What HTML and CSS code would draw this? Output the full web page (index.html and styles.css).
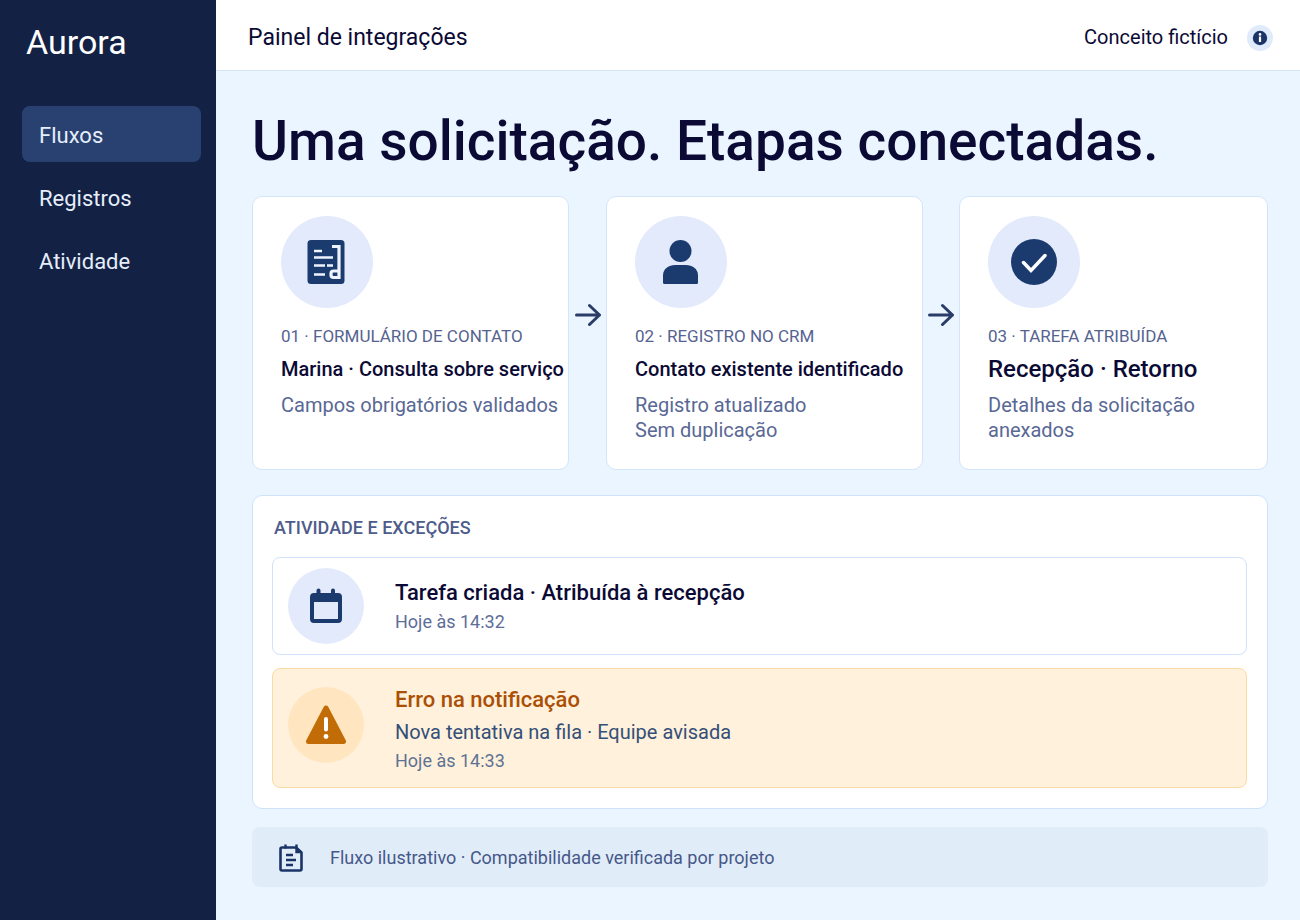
FILE: index.html
```html
<!DOCTYPE html>
<html lang="pt-BR">
<head>
    <meta charset="UTF-8">
    <meta name="viewport" content="width=device-width, initial-scale=1.0">
    <title>Aurora - Painel de integrações</title>
    <link rel="stylesheet" href="styles.css">
</head>
<body>

    <aside class="sidebar">
        <div class="brand">Aurora</div>
        <nav class="menu">
            <a href="#fluxos" class="active">Fluxos</a>
            <a href="#registros">Registros</a>
            <a href="#atividade">Atividade</a>
        </nav>
    </aside>

    <div class="page">
        <header class="topbar">
            <div class="topbar-title">Painel de integrações</div>
            <div class="topbar-right">
                <span>Conceito fictício</span>
                <button class="info" aria-label="Informações">
                    <svg width="26" height="26" viewBox="0 0 26 26">
                        <circle cx="13" cy="13" r="7.2" fill="#1b3468"/>
                        <circle cx="13" cy="9.4" r="1.3" fill="#fff"/>
                        <path d="M13 11.5v5.5" stroke="#fff" stroke-width="2.2"/>
                    </svg>
                </button>
            </div>
        </header>

        <main class="content">
            <h1>Uma solicitação. Etapas conectadas.</h1>

            <section class="steps" id="fluxos">
                <article class="card">
                    <div class="circle">
                        <svg width="48" height="48" viewBox="0 0 48 48">
                            <rect x="4.500" y="2" width="37" height="44" rx="3.500" fill="#1b3a6e"/>
                            <g fill="none" stroke="#eef3ff" stroke-width="2.400">
                                <path d="M11 13h8M11 19.500h19M11 27.500h11M24 27.500h6M11 36.500h11"/>
                                <path d="M29 8.500h7v31h-5.500q-2.500 0-2.500-2.500v-1.500q0-2.500 2.500-2.500h5.500" stroke-width="3.200"/>
                            </g>
                        </svg>
                    </div>
                    <p class="step">01 · FORMULÁRIO DE CONTATO</p>
                    <h2>Marina · Consulta sobre serviço</h2>
                    <p class="desc">Campos obrigatórios validados</p>
                </article>

                <svg class="arrow" width="26" height="24" viewBox="0 0 26 24">
                    <path d="M1.500 12h23M14.500 2.500l10 9.500l-10 9.500"/>
                </svg>

                <article class="card">
                    <div class="circle">
                        <svg width="48" height="48" viewBox="0 0 48 48" fill="#1b3a6e">
                            <circle cx="23.500" cy="13" r="11"/>
                            <path d="M6 44.500v-7c0-7 6-10.500 12-10.500h11c6 0 12 3.500 12 10.500v7q0 1.500-1.500 1.500h-32q-1.500 0-1.500-1.500z"/>
                        </svg>
                    </div>
                    <p class="step">02 · REGISTRO NO CRM</p>
                    <h2>Contato existente identificado</h2>
                    <p class="desc">Registro atualizado<br>Sem duplicação</p>
                </article>

                <svg class="arrow" width="26" height="24" viewBox="0 0 26 24">
                    <path d="M1.500 12h23M14.500 2.500l10 9.500l-10 9.500"/>
                </svg>

                <article class="card">
                    <div class="circle">
                        <svg width="48" height="48" viewBox="0 0 48 48">
                            <circle cx="24" cy="24" r="23" fill="#1b3a6e"/>
                            <path d="M13.500 24.500l7.500 8l14-15" fill="none" stroke="#fff" stroke-width="3.500" stroke-linecap="round"/>
                        </svg>
                    </div>
                    <p class="step">03 · TAREFA ATRIBUÍDA</p>
                    <h2 class="large">Recepção · Retorno</h2>
                    <p class="desc">Detalhes da solicitação<br>anexados</p>
                </article>
            </section>

            <section class="panel" id="atividade">
                <h3>ATIVIDADE E EXCEÇÕES</h3>

                <div class="event">
                    <div class="circle small">
                        <svg width="36" height="38" viewBox="0 0 36 38">
                            <rect x="4" y="8" width="28" height="26" rx="2" fill="none" stroke="#1b3a6e" stroke-width="4"/>
                            <path d="M3 7h30v8H3z" fill="#1b3a6e"/>
                            <path d="M10.500 3.500v5M25 3.500v5" stroke="#1b3a6e" stroke-width="4" stroke-linecap="round"/>
                        </svg>
                    </div>
                    <div>
                        <h4>Tarefa criada · Atribuída à recepção</h4>
                        <p class="time">Hoje às 14:32</p>
                    </div>
                </div>

                <div class="event warning">
                    <div class="circle small">
                        <svg width="44" height="42" viewBox="0 0 44 42">
                            <path d="M22 4L39.500 37.500H4.500z" fill="#c26c08" stroke="#c26c08" stroke-width="5" stroke-linejoin="round"/>
                            <path d="M22 15v10.500" stroke="#fff" stroke-width="4" stroke-linecap="round"/>
                            <circle cx="22" cy="32.500" r="2.400" fill="#fff"/>
                        </svg>
                    </div>
                    <div>
                        <h4>Erro na notificação</h4>
                        <p class="detail">Nova tentativa na fila · Equipe avisada</p>
                        <p class="time">Hoje às 14:33</p>
                    </div>
                </div>
            </section>

            <footer class="note">
                <svg width="26" height="30" viewBox="0 0 26 30" fill="none" stroke="#1b3468" stroke-width="2.600">
                    <path d="M18 4.500H4q-1.500 0-1.500 1.500v20q0 1.500 1.500 1.500h18q1.500 0 1.500-1.500V9.500z" stroke-linejoin="round"/>
                    <path d="M7.500 1.500v4M18.500 1.500v7.500h4.500M8 12h7M8 17h10M8 22h7" stroke-width="2.400"/>
                </svg>
                <span>Fluxo ilustrativo · Compatibilidade verificada por projeto</span>
            </footer>
        </main>
    </div>

</body>
</html>
```

FILE: styles.css
```css
* {
    box-sizing: border-box;
}

body {
    margin: 0;
    min-height: 100vh;
    display: flex;
    font-family: Roboto, "Open Sans", sans-serif;
    background-color: #ebf5ff;
    color: #0b0a35;
}

h1, h2, h3, h4, p {
    margin: 0;
}

.sidebar {
    width: 216px;
    flex-shrink: 0;
    padding: 20px 15px 20px 22px;
    background-color: #132144;
}

.brand {
    padding-left: 4px;
    font-size: 34px;
    line-height: 44px;
    color: #fff;
}

.menu {
    display: flex;
    flex-direction: column;
    gap: 7px;
    margin-top: 42px;
}

.menu a {
    padding: 3px 17px 0;
    border-radius: 8px;
    font-size: 22px;
    line-height: 53px;
    color: #e6eefb;
    text-decoration: none;
}

.menu a.active {
    background-color: #294170;
}

.page {
    flex: 1;
    min-width: 0;
}

.topbar {
    display: flex;
    align-items: center;
    justify-content: space-between;
    padding: 5px 27px 0 32px;
    background-color: #fff;
    border-bottom: 1px solid #d5e6f8;
    font-size: 23px;
    line-height: 65px;
}

.topbar-right {
    display: flex;
    align-items: center;
    gap: 19px;
    font-size: 20px;
}

.info {
    display: flex;
    padding: 0;
    border: none;
    border-radius: 50%;
    background-color: #dfeafb;
    cursor: pointer;
}

.content {
    padding: 34px 32px 34px 36px;
}

h1 {
    font-size: 55px;
    line-height: 72px;
    font-weight: 500;
    white-space: nowrap;
}

.steps {
    display: grid;
    grid-template-columns: 317fr 37px 317fr 36px 309fr;
    align-items: stretch;
    margin-top: 19px;
}

.card {
    min-width: 0;
    min-height: 274px;
    padding: 19px 0 24px 28px;
    background-color: #fff;
    border: 1px solid #d3e5fa;
    border-radius: 10px;
}

.circle {
    display: flex;
    align-items: center;
    justify-content: center;
    flex-shrink: 0;
    width: 92px;
    height: 92px;
    border-radius: 50%;
    background-color: #e2eafc;
}

.circle.small {
    width: 76px;
    height: 76px;
}

.step {
    margin-top: 16px;
    font-size: 17px;
    line-height: 24px;
    color: #566390;
}

h2 {
    margin-top: 6px;
    font-size: 20px;
    line-height: 30px;
    font-weight: 500;
    white-space: nowrap;
}

h2.large {
    font-size: 24px;
}

.desc {
    margin-top: 9px;
    font-size: 20px;
    line-height: 25px;
    color: #596894;
}

.arrow {
    align-self: center;
    justify-self: center;
    margin-bottom: 36px;
    fill: none;
    stroke: #2c3c69;
    stroke-width: 3;
    stroke-linecap: round;
    stroke-linejoin: round;
}

.panel {
    margin-top: 25px;
    padding: 20px 20px 20px 19px;
    background-color: #fff;
    border: 1px solid #cfe2fa;
    border-radius: 10px;
}

h3 {
    padding-left: 2px;
    font-size: 18px;
    line-height: 24px;
    font-weight: 500;
    color: #4d5c8b;
}

.event {
    display: flex;
    align-items: center;
    gap: 31px;
    margin-top: 17px;
    padding: 10px 15px;
    border: 1px solid #cfe2fa;
    border-radius: 8px;
}

h4 {
    font-size: 22px;
    line-height: 32px;
    font-weight: 500;
}

.detail {
    font-size: 20px;
    line-height: 32px;
    color: #344f78;
}

.time {
    font-size: 18px;
    line-height: 26px;
    color: #5e6e98;
}

.event.warning {
    margin-top: 13px;
    padding: 15px 15px 13px;
    background-color: #fff1dc;
    border-color: #fbdba5;
}

.warning .circle {
    margin-bottom: 8px;
    background-color: #ffe6c0;
}

.warning h4 {
    color: #ab4f05;
}

.warning .time {
    color: #5e7393;
}

.note {
    display: flex;
    align-items: center;
    gap: 26px;
    margin-top: 18px;
    padding: 2px 26px 0;
    border-radius: 8px;
    background-color: #e1ecf9;
    font-size: 18px;
    line-height: 58px;
    color: #465889;
}
```
